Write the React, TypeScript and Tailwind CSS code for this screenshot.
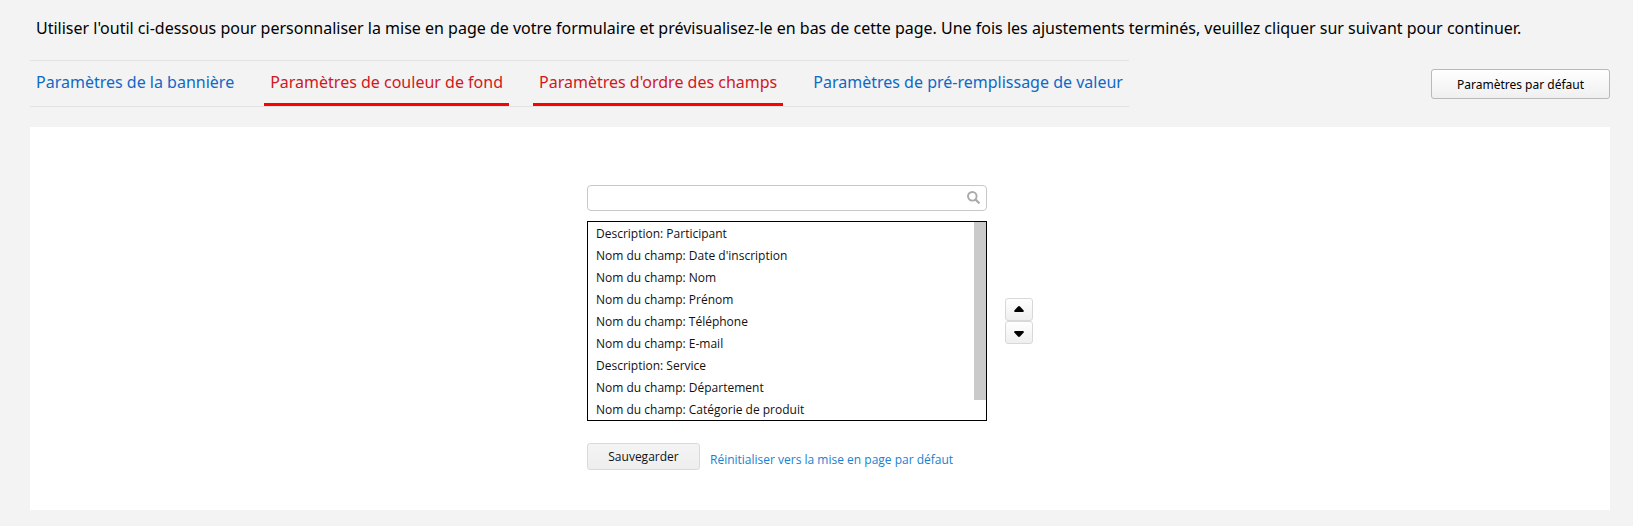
import { useState } from 'react';

const tabs = [
  { label: 'Paramètres de la bannière', active: false },
  { label: 'Paramètres de couleur de fond', active: true },
  { label: "Paramètres d'ordre des champs", active: true },
  { label: 'Paramètres de pré-remplissage de valeur', active: false },
];

const initialFields = [
  'Description: Participant',
  "Nom du champ: Date d'inscription",
  'Nom du champ: Nom',
  'Nom du champ: Prénom',
  'Nom du champ: Téléphone',
  'Nom du champ: E-mail',
  'Description: Service',
  'Nom du champ: Département',
  'Nom du champ: Catégorie de produit',
];

function TabBar() {
  return (
    <nav className="flex gap-6 border-y border-[#e2e2e2]">
      {tabs.map((tab) => (
        <a
          key={tab.label}
          href="#"
          className={
            tab.active
              ? 'px-[6px] py-[9px] leading-6 whitespace-nowrap text-[#d0181e] border-b-3 border-[#ff0000]'
              : 'px-[6px] py-[9px] leading-6 whitespace-nowrap text-[#0f69c6] border-b-3 border-transparent'
          }
        >
          {tab.label}
        </a>
      ))}
    </nav>
  );
}

function SearchBox() {
  return (
    <div className="relative">
      <input
        type="text"
        aria-label="Rechercher"
        className="block w-full h-[26px] pl-2 pr-7 text-xs bg-white border border-[#c8c8c8] rounded outline-none"
      />
      <svg className="absolute right-[7px] top-[6px]" width="13" height="13" viewBox="0 0 13 13" fill="none" stroke="#aaaaaa">
        <circle cx="5.3" cy="5.3" r="4.3" strokeWidth="1.9" />
        <path d="M8.6 8.6l3.2 3.2" strokeWidth="2.2" strokeLinecap="round" />
      </svg>
    </div>
  );
}

export default function App() {
  const [fields, setFields] = useState(initialFields);
  const [selected, setSelected] = useState<string[]>([]);

  const move = (step: number) => {
    const from = fields.indexOf(selected[0]);
    const to = from + step;
    if (from < 0 || to < 0 || to >= fields.length) return;
    const next = [...fields];
    [next[from], next[to]] = [next[to], next[from]];
    setFields(next);
  };

  return (
    <div className="min-h-screen bg-[#f3f3f3] pl-[30px] pr-[23px] py-4 font-['Noto_Sans',sans-serif] text-base text-black">
      <p className="px-[6px] leading-6">
        Utiliser l'outil ci-dessous pour personnaliser la mise en page de votre formulaire et prévisualisez-le en bas de
        cette page. Une fois les ajustements terminés, veuillez cliquer sur suivant pour continuer.
      </p>

      <div className="flex items-center justify-between mt-5">
        <TabBar />
        <button className="w-[179px] h-[30px] pt-[2px] text-xs border border-[#b9b9b9] rounded-[3px] bg-linear-to-b from-white to-[#efefef]">
          Paramètres par défaut
        </button>
      </div>

      <main className="mt-5 pt-[58px] pb-10 pr-5 bg-white flex justify-center gap-[18px] font-['Open_Sans',sans-serif] text-xs">
        <div className="w-[400px]">
          <SearchBox />

          <div className="relative mt-[10px] border border-black">
            <select
              multiple
              size={9}
              aria-label="Ordre des champs"
              value={selected}
              onChange={(e) => setSelected(Array.from(e.target.selectedOptions, (o) => o.value))}
              className="block w-full h-[198px] text-xs text-[#111111] outline-none [scrollbar-width:none]"
            >
              {fields.map((field) => (
                <option key={field} value={field} className="h-[22px] min-h-[22px] px-2 pt-[3px] pb-0">
                  {field}
                </option>
              ))}
            </select>
            <div className="absolute top-0 right-0 w-3 h-[178px] bg-[#cacaca]" />
          </div>

          <div className="flex items-center gap-[10px] mt-[22px]">
            <button className="w-[113px] h-[27px] border border-[#dadada] rounded-[3px] bg-linear-to-b from-[#f4f4f4] to-[#eeeeee] text-[#111111]">
              Sauvegarder
            </button>
            <a href="#" className="pt-[6px] text-[#1a7fd0]">
              Réinitialiser vers la mise en page par défaut
            </a>
          </div>
        </div>

        <div className="flex flex-col mt-[113px]">
          <button
            aria-label="Monter"
            onClick={() => move(-1)}
            className="w-7 h-[23px] pb-[2px] flex items-center justify-center border border-[#d8d8d8] rounded-[3px] bg-linear-to-b from-white to-[#efefef]"
          >
            <svg width="10" height="6" viewBox="0 0 10 6">
              <path d="M4 .5Q5-.4 6 .5L9.7 4.6Q10 6 9 6H1Q0 6 .3 4.6Z" />
            </svg>
          </button>
          <button
            aria-label="Descendre"
            onClick={() => move(1)}
            className="w-7 h-[23px] pt-[2px] flex items-center justify-center border border-[#d8d8d8] rounded-[3px] bg-linear-to-b from-white to-[#efefef]"
          >
            <svg width="10" height="6" viewBox="0 0 10 6">
              <path d="M4 5.5Q5 6.4 6 5.5L9.7 1.4Q10 0 9 0H1Q0 0 .3 1.4Z" />
            </svg>
          </button>
        </div>
      </main>
    </div>
  );
}
